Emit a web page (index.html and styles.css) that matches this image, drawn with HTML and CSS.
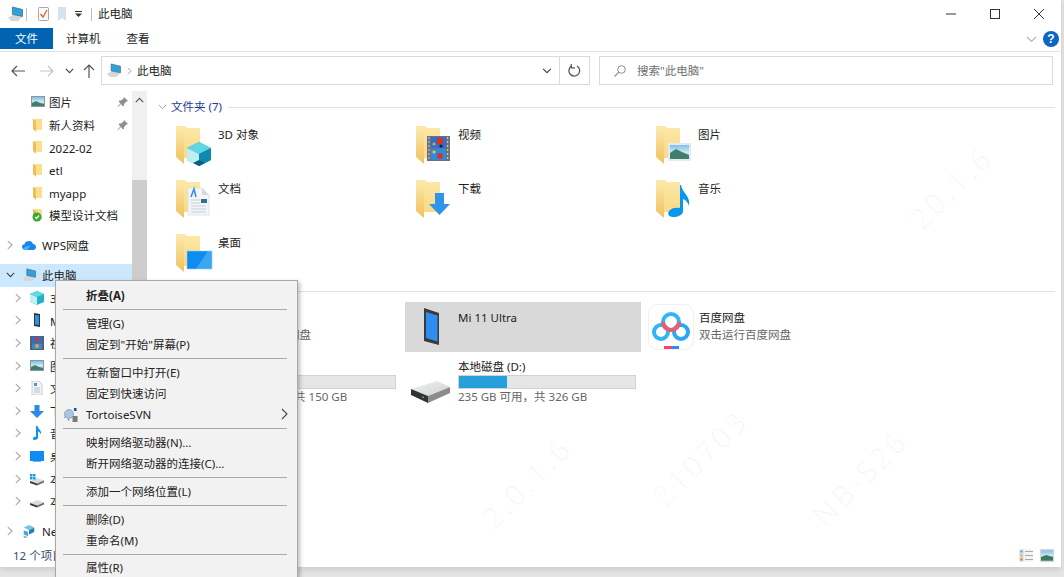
FILE: index.html
```html
<!DOCTYPE html>
<html lang="zh-CN">
<head>
<meta charset="utf-8">
<title>此电脑</title>
<link rel="stylesheet" href="styles.css">
</head>
<body>
<svg class="sprite" aria-hidden="true">
  <defs>
    <linearGradient id="flap" x1="0" y1="0" x2="0" y2="1"><stop offset="0" stop-color="#fdeab0"/><stop offset="1" stop-color="#f0c05a"/></linearGradient>
    <linearGradient id="back" x1="0" y1="0" x2="0" y2="1"><stop offset="0" stop-color="#fce8a8"/><stop offset="1" stop-color="#f9da86"/></linearGradient>
    <linearGradient id="sky" x1="0" y1="0" x2="0" y2="1"><stop offset="0" stop-color="#7cc0ea"/><stop offset=".55" stop-color="#d6ebf0"/><stop offset="1" stop-color="#5a97a4"/></linearGradient>
    <linearGradient id="disktop" x1="0" y1="0" x2="1" y2="1"><stop offset="0" stop-color="#f1f1f2"/><stop offset="1" stop-color="#cfd1d3"/></linearGradient>
    <symbol id="folder" viewBox="0 0 40 42"><path d="M0 2H9L11 4H24V34H8Z" fill="url(#back)"/><path d="M0 2L8 9V40L0 33Z" fill="url(#flap)"/></symbol>
    <symbol id="cube" viewBox="0 0 40 42"><path d="M23 18L35 24V36L23 42L11 36V24Z" fill="#19a9c6"/><path d="M23 18L35 24L23 30L11 24Z" fill="#5fd6e4"/><path d="M11 24L23 30V42L11 36Z" fill="#bdeff2"/><path d="M23 30L35 24V36L23 42Z" fill="#0f89ae"/><path d="M17 39L23 36L29 39L23 42Z" fill="#0a5f80"/></symbol>
    <symbol id="film" viewBox="0 0 40 42"><rect x="11" y="12" width="23" height="25" fill="#6e7278"/><rect x="15" y="13" width="15" height="11" fill="#2b6fd6"/><rect x="15" y="25" width="15" height="11" fill="#2b8be0"/><circle cx="24" cy="17" r="3.400" fill="#d9321f"/><circle cx="18" cy="20" r="1.600" fill="#e9a12a"/><circle cx="25" cy="22" r="1.600" fill="#1d1d1d"/><circle cx="24" cy="32" r="3" fill="#d9321f"/><circle cx="18" cy="28" r="1.500" fill="#f0d04a"/><path d="M12.500 14h1M12.500 18h1M12.500 22h1M12.500 26h1M12.500 30h1M12.500 34h1M31 14h1.200M31 18h1.200M31 22h1.200M31 26h1.200M31 30h1.200M31 34h1.200" stroke="#e6e6e6" stroke-width="1.500"/></symbol>
    <symbol id="pict" viewBox="0 0 40 42"><rect x="12" y="19" width="23" height="18" fill="#e4ebef"/><rect x="14" y="21" width="19" height="14" fill="url(#sky)"/><path d="M14 29L20 25L26 28L33 31V35H14Z" fill="#3f7f6c"/></symbol>
    <symbol id="doc" viewBox="0 0 40 42"><path d="M12 10H26L33 17V37H12Z" fill="#f4f5f6" stroke="#dcdfe2" stroke-width=".8"/><path d="M26 10V17H33Z" fill="#d5d9dd"/><path d="M15 19L18 11L20 19" fill="none" stroke="#3c8edb" stroke-width="1.600"/><path d="M15 22H24M15 25H24M15 28H30M15 31H30M15 34H30" stroke="#c8ced3"/><rect x="25" y="21" width="6" height="4" fill="#2f6f8f"/></symbol>
    <symbol id="down" viewBox="0 0 40 42"><path d="M19 15H28V26H34L23.500 37L13 26H19Z" fill="#2f95ea"/></symbol>
    <symbol id="note" viewBox="0 0 40 42"><path d="M25 7C26 15 35 18 33 28C32 25 30 22 27 21V33C27 37 22 39 17 39C13 39 11 36 13 33C15 30 20 29 24 30V7Z" fill="#0b96ee"/></symbol>
    <symbol id="screen" viewBox="0 0 40 42"><rect x="11" y="19" width="25" height="18" fill="#0f8cf0"/><path d="M20 37L32 19H36V37Z" fill="#3aa7f5"/><rect x="11" y="19" width="25" height="18" fill="none" stroke="#8ec9f5" stroke-width=".6"/></symbol>

    <symbol id="pc" viewBox="0 0 16 16"><path d="M1 11.500L6 9L15 11L11 15H4Z" fill="#d4d6d8"/><path d="M5.500 1L15.500 3.500V10.500L5.500 8.500Z" fill="#2ba3df" stroke="#4a6472" stroke-width=".7"/></symbol>
    <symbol id="sfolder" viewBox="0 0 14 14"><path d="M2 1H11V12H5Z" fill="#fbdf8f"/><path d="M2 1L5 3V14L2 11Z" fill="#efbe57"/></symbol>
    <symbol id="spic" viewBox="0 0 14 14"><rect x="0" y="1" width="14" height="11" fill="#8b97a3"/><rect x="1" y="2" width="12" height="9" fill="url(#sky)"/><path d="M1 8L5 6L9 8L13 9V11H1Z" fill="#3f7f6c"/></symbol>
    <symbol id="wps" viewBox="0 0 14 14"><path d="M3.500 12C1.500 12 0 10.500 0 9C0 7.500 1 6.500 2.500 6.300C3 4 5 3 7 3C9 3 10.500 4.300 11 6C12.800 6.200 14 7.400 14 9C14 10.700 12.600 12 11 12Z" fill="#1a84ef"/><path d="M1 11C3 8 6 7 9 8C7 9 6 10.500 6 12H3.500C2.500 12 1.600 11.700 1 11Z" fill="#4fb0f7"/></symbol>
    <symbol id="cube16" viewBox="0 0 14 14"><path d="M7 0L14 3V11L7 14L0 11V3Z" fill="#23b2cc"/><path d="M0 3L7 6V14L0 11Z" fill="#c4f0f2"/><path d="M7 0L14 3L7 6L0 3Z" fill="#62d8e4"/></symbol>
    <symbol id="sphone" viewBox="0 0 14 14"><path d="M4 0L10 1V14L4 13Z" fill="#333"/><path d="M5 2L9 2.500V12L5 11.500Z" fill="#2e8ff0"/></symbol>
    <symbol id="sfilm" viewBox="0 0 14 14"><rect x="0" y="0" width="14" height="14" fill="#5c6066"/><rect x="2" y="1" width="10" height="5.500" fill="#2b6fd6"/><rect x="2" y="7.500" width="10" height="5.500" fill="#2b8be0"/><circle cx="7" cy="3.500" r="2" fill="#d9321f"/><circle cx="7" cy="10" r="2" fill="#e9a12a"/></symbol>
    <symbol id="sdoc" viewBox="0 0 14 14"><path d="M2 0H9L12 3V14H2Z" fill="#f3f5f7" stroke="#a9b2ba" stroke-width=".6"/><path d="M4 7H10M4 9H10M4 11H10" stroke="#b7c0c8"/><rect x="4" y="2" width="3" height="3" fill="#4b96d8"/></symbol>
    <symbol id="sdown" viewBox="0 0 14 14"><path d="M4.500 1H9.500V7H14L7 14L0 7H4.500Z" fill="#2a8ce2"/></symbol>
    <symbol id="snote" viewBox="0 0 14 14"><path d="M6 0H7.500C8 3 12 4.500 11 8.500C10.500 7 9.500 6 8 5.500V11.500C8 13 6.500 14 4.500 14C3 14 2.500 12.800 3 12C3.600 11 5 10.500 6 10.700Z" fill="#0b96ee"/></symbol>
    <symbol id="sscreen" viewBox="0 0 14 14"><rect x="0" y="2" width="14" height="10" fill="#0f8cf0"/><rect x="3" y="12" width="8" height="1" fill="#66b6f3"/></symbol>
    <symbol id="sdisk" viewBox="0 0 14 14"><path d="M0 9L7 6L14 8.500L7 11.500Z" fill="#d9dbdd"/><path d="M0 9L7 11.500V13.500L0 11Z" fill="#3a3a3a"/><path d="M7 11.500L14 8.500V10.500L7 13.500Z" fill="#6d6d6d"/></symbol>
    <symbol id="netw" viewBox="0 0 16 16"><path d="M8 1L14 4L8 7L2 4Z" fill="#7cc3ea"/><path d="M14 4V9L8 12V7Z" fill="#2580b8"/><path d="M2 7L7 9V14L2 12Z" fill="#46a5dc"/><path d="M1 13L7 15L3 16Z" fill="#999"/></symbol>
    <symbol id="tsvn" viewBox="0 0 16 16"><circle cx="6" cy="7" r="4.500" fill="#a9c4e4" stroke="#74879b" stroke-width=".6"/><path d="M1 11L3 9M5 12L6 14" stroke="#74879b"/><rect x="9.500" y="9" width="5" height="6" fill="#7a7a7a"/><rect x="11" y="1" width="2.500" height="3" fill="#13529b"/></symbol>
    <symbol id="chev-r" viewBox="0 0 7 11"><path d="M1 1L6 5.500L1 10" fill="none" stroke="#a6a6a6" stroke-width="1.300"/></symbol>
    <symbol id="chev-d" viewBox="0 0 11 7"><path d="M1 1L5.500 5.500L10 1" fill="none" stroke="#444" stroke-width="1.300"/></symbol>
    <symbol id="pin" viewBox="0 0 12 12"><path d="M7 1L11 5L9.500 5.500L7 8L7 10L5.500 10L4 8L1 11L0.500 10.500L3.500 7.500L2 6V4.500L4 4.500L6.500 2.500Z" fill="#8a9096"/></symbol>
  </defs>
</svg>

<div class="window">
  <header class="titlebar">
    <svg class="qa-pc"><use href="#pc"/></svg>
    <span class="vsep"></span>
    <svg class="qa-check" viewBox="0 0 11 14"><rect x=".5" y=".5" width="10" height="13" rx="1" fill="#fbfbfb" stroke="#a7a7a7"/><path d="M2.500 7L5 10L9 3" fill="none" stroke="#e2622a" stroke-width="1.300"/></svg>
    <svg class="qa-flag" viewBox="0 0 8 14"><path d="M0 0H8V14L4 11L0 14Z" fill="#d5e1ee"/></svg>
    <svg class="qa-drop" viewBox="0 0 7 6"><rect x="0" y="0" width="7" height="1" fill="#333"/><path d="M0 2.500H7L3.500 6Z" fill="#333"/></svg>
    <span class="vsep vsep-b"></span>
    <span class="title">此电脑</span>
    <div class="winbtns">
      <span class="winbtn"><svg viewBox="0 0 10 10"><path d="M0 5H10" stroke="#333"/></svg></span>
      <span class="winbtn"><svg viewBox="0 0 10 10"><rect x=".5" y=".5" width="9" height="9" fill="none" stroke="#333"/></svg></span>
      <span class="winbtn"><svg viewBox="0 0 10 10"><path d="M0 0L10 10M10 0L0 10" stroke="#333"/></svg></span>
    </div>
  </header>

  <nav class="tabs">
    <span class="tab tab-file">文件</span>
    <span class="tab tab-a">计算机</span>
    <span class="tab tab-b">查看</span>
    <svg class="ribbon-chev" viewBox="0 0 11 7"><path d="M1 1L5.500 5.500L10 1" fill="none" stroke="#b5b5b5" stroke-width="1.200"/></svg>
    <span class="help">?</span>
  </nav>

  <div class="addr">
    <div class="navbtns">
      <svg class="nav-back" viewBox="0 0 14 12"><path d="M14 6H1M6 1L1 6L6 11" fill="none" stroke="#555" stroke-width="1.200"/></svg>
      <svg class="nav-fwd" viewBox="0 0 14 12"><path d="M0 6H13M8 1L13 6L8 11" fill="none" stroke="#c4c4c4" stroke-width="1.200"/></svg>
      <svg class="nav-dd"><use href="#chev-d"/></svg>
      <svg class="nav-up" viewBox="0 0 12 14"><path d="M6 14V1M1 6L6 1L11 6" fill="none" stroke="#555" stroke-width="1.200"/></svg>
    </div>
    <div class="addrbox">
      <svg class="addr-pc"><use href="#pc"/></svg>
      <svg class="addr-chev"><use href="#chev-r"/></svg>
      <span class="addr-text">此电脑</span>
      <svg class="addr-dd"><use href="#chev-d"/></svg>
      <span class="addr-refresh">
        <svg viewBox="0 0 12 12"><path d="M8.300 1.800A5 5 0 1 1 3.500 1.700" fill="none" stroke="#555" stroke-width="1.200"/><path d="M3 0V3.500H6.500" fill="none" stroke="#555" stroke-width="1.100"/></svg>
      </span>
    </div>
    <div class="searchbox">
      <svg viewBox="0 0 12 12"><circle cx="7.500" cy="4.500" r="3.800" fill="none" stroke="#8a8a8a"/><path d="M4.800 7.200L.5 11.500" stroke="#8a8a8a" stroke-width="1.100"/></svg>
      <span>搜索"此电脑"</span>
    </div>
  </div>

  <div class="main">
    <aside class="tree">
      <div class="tree-rows">
        <div class="row row-quick"><svg class="ico"><use href="#spic"/></svg><span>图片</span><svg class="pin"><use href="#pin"/></svg></div>
        <div class="row row-quick"><svg class="ico"><use href="#sfolder"/></svg><span>新人资料</span><svg class="pin"><use href="#pin"/></svg></div>
        <div class="row row-quick"><svg class="ico"><use href="#sfolder"/></svg><span>2022-02</span></div>
        <div class="row row-quick"><svg class="ico"><use href="#sfolder"/></svg><span>etl</span></div>
        <div class="row row-quick"><svg class="ico"><use href="#sfolder"/></svg><span>myapp</span></div>
        <div class="row row-quick"><svg class="ico" viewBox="0 0 14 14"><use href="#sfolder"/><circle cx="6" cy="9" r="4.500" fill="#3aa53a"/><path d="M4 9L5.500 10.500L8 7.500" fill="none" stroke="#fff" stroke-width="1.200"/></svg><span>模型设计文档</span></div>

        <div class="row row-root row-gap"><svg class="chev"><use href="#chev-r"/></svg><svg class="ico"><use href="#wps"/></svg><span>WPS网盘</span></div>
        <div class="row row-root row-gap row-sel"><svg class="chev-open"><use href="#chev-d"/></svg><svg class="ico"><use href="#pc"/></svg><span>此电脑</span></div>
        <div class="row row-child"><svg class="chev"><use href="#chev-r"/></svg><svg class="ico"><use href="#cube16"/></svg><span>3D 对象</span></div>
        <div class="row row-child"><svg class="chev"><use href="#chev-r"/></svg><svg class="ico"><use href="#sphone"/></svg><span>Mi 11 Ultra</span></div>
        <div class="row row-child"><svg class="chev"><use href="#chev-r"/></svg><svg class="ico"><use href="#sfilm"/></svg><span>视频</span></div>
        <div class="row row-child"><svg class="chev"><use href="#chev-r"/></svg><svg class="ico"><use href="#spic"/></svg><span>图片</span></div>
        <div class="row row-child"><svg class="chev"><use href="#chev-r"/></svg><svg class="ico"><use href="#sdoc"/></svg><span>文档</span></div>
        <div class="row row-child"><svg class="chev"><use href="#chev-r"/></svg><svg class="ico"><use href="#sdown"/></svg><span>下载</span></div>
        <div class="row row-child"><svg class="chev"><use href="#chev-r"/></svg><svg class="ico"><use href="#snote"/></svg><span>音乐</span></div>
        <div class="row row-child"><svg class="chev"><use href="#chev-r"/></svg><svg class="ico"><use href="#sscreen"/></svg><span>桌面</span></div>
        <div class="row row-child"><svg class="chev"><use href="#chev-r"/></svg><svg class="ico" viewBox="0 0 14 14"><use href="#sdisk"/><rect x="0" y="2" width="2.500" height="2.500" fill="#1a9be6"/><rect x="3" y="2" width="2.500" height="2.500" fill="#1a9be6"/><rect x="0" y="5" width="2.500" height="2.500" fill="#1a9be6"/><rect x="3" y="5" width="2.500" height="2.500" fill="#1a9be6"/></svg><span>本地磁盘 (C:)</span></div>
        <div class="row row-child"><svg class="chev"><use href="#chev-r"/></svg><svg class="ico"><use href="#sdisk"/></svg><span>本地磁盘 (D:)</span></div>
        <div class="row row-root row-net"><svg class="chev"><use href="#chev-r"/></svg><svg class="ico"><use href="#netw"/></svg><span>Network</span></div>
      </div>
      <div class="vscroll"><svg viewBox="0 0 11 7"><path d="M1 6L5.500 1.500L10 6" fill="none" stroke="#555" stroke-width="1.400"/></svg><span class="thumb"></span></div>
    </aside>

    <main class="content">
      <div class="group"><svg viewBox="0 0 11 7"><path d="M1 1L5.500 5.500L10 1" fill="none" stroke="#8a8a8a"/></svg><span>文件夹 (7)</span><i></i></div>
      <div class="grid grid-folders">
        <div class="tile"><svg class="big"><use href="#folder"/><use href="#cube"/></svg><span class="name">3D 对象</span></div>
        <div class="tile"><svg class="big"><use href="#folder"/><use href="#film"/></svg><span class="name">视频</span></div>
        <div class="tile"><svg class="big"><use href="#folder"/><use href="#pict"/></svg><span class="name">图片</span></div>
        <div class="tile"><svg class="big"><use href="#folder"/><use href="#doc"/></svg><span class="name">文档</span></div>
        <div class="tile"><svg class="big"><use href="#folder"/><use href="#down"/></svg><span class="name">下载</span></div>
        <div class="tile"><svg class="big"><use href="#folder"/><use href="#note"/></svg><span class="name">音乐</span></div>
        <div class="tile"><svg class="big"><use href="#folder"/><use href="#screen"/></svg><span class="name">桌面</span></div>
      </div>
      <div class="group"><svg viewBox="0 0 11 7"><path d="M1 1L5.500 5.500L10 1" fill="none" stroke="#8a8a8a"/></svg><span>设备和驱动器 (5)</span><i></i></div>
      <div class="grid grid-dev">
        <div class="tile dev"><svg class="big"><use href="#wps"/></svg><div class="info"><span class="name">WPS网盘</span><span class="sub">双击进入WPS网盘</span></div></div>
        <div class="tile dev tile-sel">
          <svg class="big" viewBox="0 0 40 42"><path d="M8 3L23 8V40L8 36Z" fill="#3a3a3a"/><path d="M10 7L21.500 10.500V36.500L10 33Z" fill="#2f8cf0"/></svg>
          <div class="info"><span class="name">Mi 11 Ultra</span></div>
        </div>
        <div class="tile dev tile-baidu">
          <svg class="baidu" viewBox="0 0 46 46"><rect x=".5" y=".5" width="45" height="45" rx="9" fill="#fff" stroke="#f0f0f0"/><circle cx="13" cy="28" r="7" fill="none" stroke="#31b5f6" stroke-width="4"/><circle cx="33" cy="28" r="7" fill="none" stroke="#2ba6f3" stroke-width="4"/><circle cx="23" cy="18" r="8" fill="none" stroke="#31b5f6" stroke-width="4"/><path d="M15 18A8 8 0 0 0 31 18" fill="none" stroke="#f4566a" stroke-width="4"/><rect x="16" y="42" width="8" height="3" fill="#f4466a"/><rect x="24" y="42" width="7" height="3" fill="#2b8cf3"/></svg>
          <div class="info"><span class="name">百度网盘</span><span class="sub">双击运行百度网盘</span></div>
        </div>
        <div class="tile dev">
          <svg class="big"><use href="#sdisk"/></svg>
          <div class="info"><span class="name">本地磁盘 (C:)</span><span class="bar"><b class="fill-c"></b></span><span class="sub">106 GB 可用，共 150 GB</span></div>
        </div>
        <div class="tile dev">
          <svg class="big" viewBox="0 0 40 42"><path d="M-5 32L21 24L34 30L12 39Z" fill="url(#disktop)"/><path d="M-5 32L12 39V46L-5 38Z" fill="#333"/><path d="M12 39L34 30V36L12 46Z" fill="#8c8c8c"/><rect x="6" y="39.500" width="2" height="1.500" fill="#49b24f"/></svg>
          <div class="info"><span class="name">本地磁盘 (D:)</span><span class="bar"><b class="fill-d"></b></span><span class="sub">235 GB 可用，共 326 GB</span></div>
        </div>
      </div>
    </main>
  </div>

  <footer class="status">
    <span>12 个项目</span>
    <svg class="view" viewBox="0 0 14 13"><rect x="0" y="0" width="14" height="13" fill="#f3f3f3"/><rect x=".5" y=".5" width="4" height="12" fill="#d9d9d9"/><rect x="1.500" y="1.500" width="2" height="2" fill="#5aa5dc"/><rect x="1.500" y="5.500" width="2" height="2" fill="#d8b25a"/><rect x="1.500" y="9.500" width="2" height="2" fill="#d8703a"/><path d="M6 2.500H14M6 6.500H14M6 10.500H14" stroke="#aaa"/></svg>
    <svg class="view view-pic" viewBox="0 0 14 13"><rect x="0" y="0" width="14" height="13" fill="#d6d6d6"/><rect x="1" y="1.500" width="12" height="10" fill="url(#sky)"/><path d="M1 8L6 6L13 8V11.500H1Z" fill="#3c7a5e"/></svg>
  </footer>
</div>

<div class="menu">
  <div class="mi mi-bold">折叠(A)</div>
  <hr>
  <div class="mi">管理(G)</div>
  <div class="mi">固定到"开始"屏幕(P)</div>
  <hr>
  <div class="mi">在新窗口中打开(E)</div>
  <div class="mi">固定到快速访问</div>
  <div class="mi mi-sub"><svg class="mi-ico"><use href="#tsvn"/></svg>TortoiseSVN<svg class="mi-arrow" viewBox="0 0 7 12"><path d="M1 1L6 6L1 11" fill="none" stroke="#444" stroke-width="1.100"/></svg></div>
  <hr>
  <div class="mi">映射网络驱动器(N)...</div>
  <div class="mi">断开网络驱动器的连接(C)...</div>
  <hr>
  <div class="mi">添加一个网络位置(L)</div>
  <hr>
  <div class="mi">删除(D)</div>
  <div class="mi">重命名(M)</div>
  <hr>
  <div class="mi mi-last">属性(R)</div>
</div>

<div class="wm wm-1">20.1.6</div>
<div class="wm wm-2">NB-S26</div>
<div class="wm wm-3">2.0.1.6</div>
<div class="wm wm-4">210703</div>
</body>
</html>
```

FILE: styles.css
```css
* { box-sizing: border-box; }
html, body { margin: 0; height: 100%; overflow: hidden; }
body {
  position: relative;
  width: 1064px;
  height: 577px;
  background: #e4e4e4;
  font: 11.5px/1.2 "Noto Sans", "Noto Sans CJK SC", sans-serif;
  color: #222;
}
.sprite { position: absolute; width: 0; height: 0; }
svg { display: block; flex: none; overflow: visible; }

.window {
  width: 1061px;
  height: 567px;
  background: #fff;
  display: flex;
  flex-direction: column;
  box-shadow: 0 2px 6px rgba(0, 0, 0, .12);
}

/* title bar */
.titlebar { height: 28px; display: flex; align-items: center; flex: none; padding-left: 7px; }
.qa-pc { width: 16px; height: 16px; }
.vsep { width: 1px; height: 13px; background: #bdbdbd; margin-left: 3px; }
.vsep-b { margin-left: 9px; }
.qa-check { width: 11px; height: 14px; margin-left: 11px; }
.qa-flag { width: 8px; height: 14px; margin-left: 9px; }
.qa-drop { width: 7px; height: 6px; margin-left: 9px; }
.title { margin-left: 6px; }
.winbtns { margin-left: auto; display: flex; }
.winbtn { width: 44px; height: 28px; display: flex; align-items: center; justify-content: center; }
.winbtn svg { width: 10px; height: 10px; }

/* ribbon tabs */
.tabs { height: 24px; flex: none; display: flex; align-items: flex-start; border-bottom: 1px solid #e3e3e3; padding-right: 2px; }
.tab { height: 21px; line-height: 22px; }
.tab-file { width: 53px; background: #0063b1; color: #fff; text-align: center; }
.tab-a { margin-left: 13px; }
.tab-b { margin-left: 26px; }
.ribbon-chev { width: 11px; height: 7px; margin: 8px 6px 0 auto; }
.help { width: 16px; height: 16px; margin-top: 3px; border-radius: 50%; background: #0d66c2; color: #fff; font: bold 12px/16px "Liberation Sans", sans-serif; text-align: center; }

/* address row */
.addr { height: 39px; flex: none; display: flex; align-items: flex-start; padding-top: 4px; }
.navbtns { width: 101px; height: 29px; display: flex; align-items: center; padding-left: 11px; }
.nav-back, .nav-fwd { width: 14px; height: 12px; }
.nav-fwd { margin-left: 15px; }
.nav-dd { width: 9px; height: 6px; margin-left: 11px; }
.nav-up { width: 12px; height: 14px; margin-left: 9px; }
.addrbox { width: 489px; height: 29px; border: 1px solid #dadada; display: flex; align-items: center; padding-left: 4px; color: #222; }
.addr-pc { width: 15px; height: 15px; }
.addr-chev { width: 5px; height: 8px; margin-left: 6px; }
.addr-text { margin-left: 5px; }
.addr-dd { width: 10px; height: 6px; margin-left: auto; }
.addr-refresh { width: 30px; height: 27px; margin-left: 7px; border-left: 1px solid #dadada; display: flex; align-items: center; justify-content: center; }
.addr-refresh svg { width: 13px; height: 13px; }
.searchbox { width: 454px; height: 29px; margin-left: 9px; border: 1px solid #dadada; display: flex; align-items: center; padding-left: 14px; color: #6f6f6f; }
.searchbox svg { width: 12px; height: 12px; }
.searchbox span { margin-left: 11px; }

/* body */
.main { flex: 1; display: flex; min-height: 0; }
.tree { width: 147px; flex: none; display: flex; }
.tree-rows { width: 132px; flex: none; overflow: hidden; }
.row { height: 22.6px; display: flex; align-items: center; white-space: nowrap; padding-right: 3px; }
.row span { padding-top: 2px; }
.row .ico { width: 14px; height: 14px; }
.row-quick { padding-left: 31px; }
.row-quick span { margin-left: 4px; }
.pin { width: 12px; height: 12px; margin-left: auto; }
.row-root { padding-left: 7px; }
.row-child { padding-left: 15px; }
.row-root span, .row-child span { margin-left: 6px; }
.chev { width: 6px; height: 10px; margin-right: 9px; }
.chev-open { width: 9px; height: 6px; margin-left: -1px; margin-right: 7px; }
.row-gap { margin-top: 7.4px; }
.row-net { margin-top: 7.4px; }
.row-sel { background: #cce8ff; }
.vscroll { width: 15px; background: #f0f0f0; display: flex; flex-direction: column; align-items: center; padding-top: 6px; }
.vscroll svg { width: 9px; height: 6px; }
.thumb { width: 15px; height: 300px; margin-top: 77px; background: #cdcdcd; }

.content { flex: 1; min-width: 0; padding-left: 18px; }
.group { height: 18px; display: flex; align-items: center; color: #1e3a8c; padding-right: 6px; }
.group:first-child { margin-top: 7px; margin-bottom: 8px; }
.group svg { width: 9px; height: 6px; margin-right: 4px; margin-left: -7px; }
.group i { flex: 1; height: 1px; background: #e3e3e3; margin-left: 6px; }
.grid { display: grid; grid-template-columns: repeat(3, 236px); column-gap: 4px; }
.grid-folders { grid-auto-rows: 50px; row-gap: 4px; }
.grid-dev { grid-auto-rows: 50px; row-gap: 2px; margin-top: 2px; }
.tile { display: flex; padding-left: 11px; }
.big { width: 40px; height: 42px; }
.tile .name { margin-left: 2px; padding-top: 4px; }
.tile-sel { background: #d9d9d9; }
.dev .big { margin-top: 3px; }
.info { display: flex; flex-direction: column; margin-left: 2px; width: 178px; }
.info .name { margin-left: 0; padding-top: 9px; }
.sub { color: #666; margin-top: 3px; white-space: nowrap; }
.tile-baidu { padding-left: 3px; }
.baidu { width: 46px; height: 46px; margin-top: 2px; margin-right: 3px; }
.tile-baidu .info { width: auto; }
.dev:nth-child(n+4) .info .name { padding-top: 6px; }
.dev:nth-child(n+4) .sub { margin-top: 1px; }
.bar { display: block; height: 14px; background: #e6e6e6; border: 1px solid #d2d2d2; margin-top: 1px; }
.bar b { display: block; height: 100%; background: #26a0da; }
.fill-c { width: 29%; }
.fill-d { width: 27.5%; }

.status { height: 23px; flex: none; display: flex; align-items: center; padding: 0 7px 0 13px; color: #3a4a6b; }
.view { width: 14px; height: 13px; margin-left: auto; }
.view-pic { margin-left: 7px; }

/* context menu */
.menu {
  position: absolute;
  left: 55px;
  top: 280px;
  width: 243px;
  height: 297px;
  overflow: hidden;
  background: #f2f2f2;
  border: 1px solid #a8a8a8;
  border-bottom: 0;
  padding: 4px 10px 0 7px;
  box-shadow: 2px 2px 4px rgba(0, 0, 0, .25);
}
.mi { height: 21px; line-height: 21px; padding-left: 23px; position: relative; white-space: nowrap; color: #222; }
.mi-bold { font-weight: 700; }
.mi-last { height: 19px; line-height: 20px; }
.menu hr { height: 1px; margin: 3px 0; border: 0; background: #a9a9a9; }
.mi-ico { position: absolute; left: 0; top: 3px; width: 16px; height: 16px; }
.mi-arrow { position: absolute; right: -1px; top: 4px; width: 7px; height: 12px; }

/* watermark */
.wm {
  position: absolute;
  font-size: 30px;
  letter-spacing: 3px;
  white-space: nowrap;
  color: rgba(0, 0, 0, .028);
  transform: rotate(-45deg);
  pointer-events: none;
}
.wm-1 { left: 900px; top: 170px; }
.wm-2 { left: 800px; top: 460px; }
.wm-3 { left: 470px; top: 465px; }
.wm-4 { left: 640px; top: 440px; }
```
